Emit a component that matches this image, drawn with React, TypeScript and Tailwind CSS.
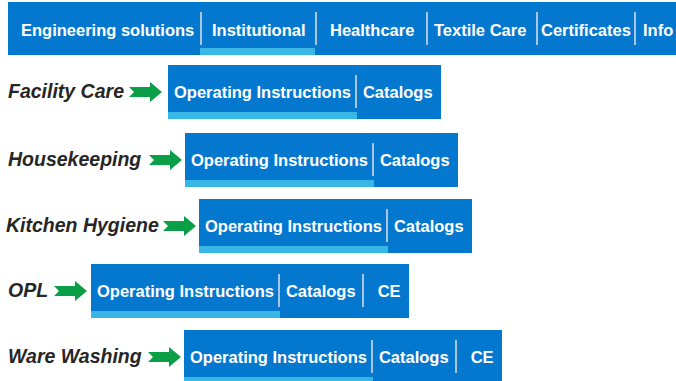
import React from "react";

const font = { fontFamily: '"Liberation Sans", Arial, sans-serif' };

function Arrow() {
  return (
    <svg width="33" height="20" viewBox="0 0 33 20" className="shrink-0">
      <polygon points="0,5 21,5 21,0 33,10 21,20 21,15 0,15 5,10" fill="#0a9e46" />
    </svg>
  );
}

type Cell = { label: string; pl: string; pr: string; active?: boolean };

function Box({ cells }: { cells: Cell[] }) {
  return (
    <div className="flex h-[54px] bg-[#0478cf] shrink-0">
      {cells.map((c, i) => (
        <div key={i} className="flex items-stretch">
          {i > 0 && (
            <div className="flex items-start pt-[10px]">
              <div className="w-[2px] h-[33px] bg-[#a9c6e0]" />
            </div>
          )}
          <div className={`relative flex items-center ${c.pl} ${c.pr} text-white font-bold text-[16.5px]`}>
            <span>{c.label}</span>
            {c.active && <div className="absolute left-0 right-[-2px] bottom-0 h-[7px] bg-[#38b6e6]" />}
          </div>
        </div>
      ))}
    </div>
  );
}

function Row({
  label,
  mt,
  cells,
  lw,
  aw,
  pl = "pl-2",
}: {
  label: string;
  mt: string;
  cells: Cell[];
  lw: string;
  aw: string;
  pl?: string;
}) {
  return (
    <div className={`flex items-center ${mt}`}>
      <div className={`${lw} ${pl} shrink-0 whitespace-nowrap italic font-bold text-[19.5px] text-[#262626]`}>{label}</div>
      <div className={`${aw} shrink-0 flex items-center`}>
        <Arrow />
      </div>
      <Box cells={cells} />
    </div>
  );
}

const OI: Cell = { label: "Operating Instructions", pl: "pl-[6px]", pr: "pr-[4px]", active: true };
const CAT: Cell = { label: "Catalogs", pl: "pl-[6px]", pr: "pr-[8px]" };
const CAT2: Cell = { label: "Catalogs", pl: "pl-[6px]", pr: "pr-[6px]" };
const CE: Cell = { label: "CE", pl: "pl-[14px]", pr: "pr-[8px]" };

export default function App() {
  return (
    <div className="w-[676px] h-[381px] overflow-hidden bg-white" style={font}>
      <div className="ml-2 mt-[2px] h-[53px] bg-[#0478cf] flex text-white font-bold text-[16.5px] whitespace-nowrap">
        {[
          { l: "Engineering solutions", w: "w-[192px]", pl: "pl-[13px]" },
          { l: "Institutional", w: "w-[113px]", pl: "pl-[10px]", active: true },
          { l: "Healthcare", w: "w-[109px]", pl: "pl-[13px]" },
          { l: "Textile Care", w: "w-[108px]", pl: "pl-[6px]" },
          { l: "Certificates", w: "w-[96px]", pl: "pl-[3px]" },
          { l: "Info", w: "w-[60px]", pl: "pl-[7px]" },
        ].map((it, i) => (
          <div key={i} className="flex shrink-0">
            {i > 0 && (
              <div className="pt-[10px]">
                <div className="w-[2px] h-[33px] bg-[#a9c6e0]" />
              </div>
            )}
            <div className={`relative flex items-center ${it.w} ${it.pl} shrink-0`}>
              <span className="mt-[3px]">{it.l}</span>
              {it.active && <div className="absolute left-[-2px] right-0 bottom-0 h-[7px] bg-[#38b6e6]" />}
            </div>
          </div>
        ))}
      </div>
      <Row label="Facility Care" mt="mt-[10px]" lw="w-[129px]" aw="w-[39px]" cells={[OI, CAT]} />
      <Row label="Housekeeping" mt="mt-[14px]" lw="w-[149px]" aw="w-[36px]" cells={[OI, CAT]} />
      <Row label="Kitchen Hygiene" mt="mt-[12px]" lw="w-[163px]" aw="w-[36px]" pl="pl-[6px]" cells={[OI, CAT]} />
      <Row label="OPL" mt="mt-[11px]" lw="w-[54px]" aw="w-[37px]" cells={[OI, CAT2, CE]} />
      <Row label="Ware Washing" mt="mt-[12px]" lw="w-[148px]" aw="w-[36px]" cells={[OI, CAT2, CE]} />
    </div>
  );
}
